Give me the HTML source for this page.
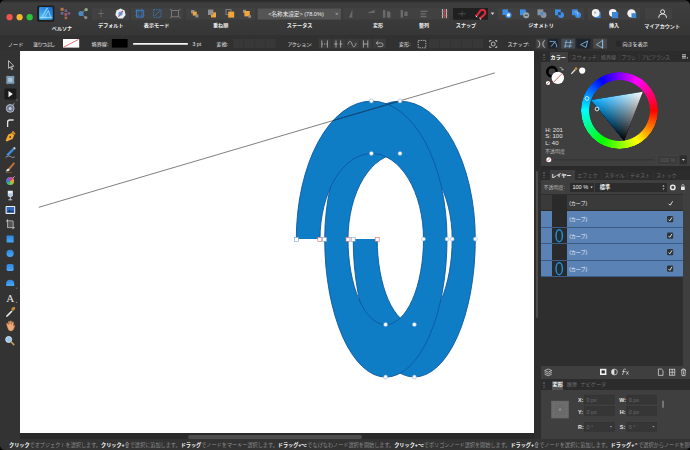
<!DOCTYPE html><html lang="ja"><head><meta charset="utf-8"><title>Affinity Designer</title><style>
*{box-sizing:border-box;margin:0;padding:0}
html,body{width:690px;height:450px;overflow:hidden;background:#333333}
body{position:relative;font-family:"Liberation Sans","Noto Sans CJK JP",sans-serif;color:#e6e6e6;font-size:5.3px;line-height:1}
.a{position:absolute}
.t{position:absolute;white-space:nowrap;line-height:8px;height:8px}
.b{font-weight:bold}
.c{text-align:center}
.lbl{position:absolute;white-space:nowrap;line-height:8px;height:8px;font-size:5.1px;color:#f0f0f0;font-weight:bold;text-align:center;transform:translateX(-50%)}
.ctx{position:absolute;white-space:nowrap;line-height:8px;height:8px;font-size:5.1px;color:#e8e8e8;top:40px}
.tab{position:absolute;white-space:nowrap;line-height:9px;height:9px;font-size:5.1px;color:#6a6a6a;top:53px}
.dim{opacity:.35}
svg{position:absolute;overflow:visible}
</style></head><body>
<div class="a" style="left:0;top:0;width:690px;height:36px;background:linear-gradient(#3f3f3f,#363636)"></div>
<div class="a" style="left:0;top:35.4px;width:690px;height:15.6px;background:#313131"></div>
<div class="a" style="left:0;top:51px;width:20px;height:399px;background:#333"></div>
<div class="a" style="left:20px;top:51px;width:514px;height:382px;background:#fff"></div>
<div class="a" style="left:20px;top:433px;width:514px;height:6px;background:#2a2a2a"></div>
<div class="a" style="left:188px;top:434.5px;width:174px;height:4px;border-radius:2px;background:#4d4d4d"></div>
<div class="a" style="left:0;top:439px;width:690px;height:11px;background:#333"></div>
<div class="a" style="left:534px;top:51px;width:7px;height:388px;background:#2e2e2e"></div>
<div class="a" style="left:535.7px;top:171px;width:2.6px;height:147px;border-radius:1.3px;background:#4d4d4d"></div>
<div class="a" style="left:541px;top:51px;width:149px;height:388px;background:#3f3f3f"></div>
<div class="a" style="left:0;top:0;width:690px;height:2.6px;background:linear-gradient(#2b2b2b 30%,#3e3e3e)"></div>
<svg class="a" style="left:0;top:0" width="690" height="52" viewBox="0 0 690 52">
<defs><linearGradient id="gA" x1="1" y1="0" x2="0.2" y2="1"><stop offset="0" stop-color="#1762cc"/><stop offset="1" stop-color="#4cc2f6"/></linearGradient></defs>
<circle cx="9.6" cy="17.2" r="3.1" fill="#f2544d"/><circle cx="19.6" cy="17.2" r="3.1" fill="#f5b52e"/><circle cx="29.7" cy="17.2" r="3.1" fill="#2bc43f"/>
<rect x="37.1" y="5.6" width="17.2" height="16.2" rx="1.5" fill="#1e1e1e"/>
<rect x="39.1" y="6.9" width="13.7" height="12.9" rx="1" fill="url(#gA)"/>
<path d="M40.6 17.4 L46.4 7.8 L48.6 7.8 L43 17.4 Z" fill="#7fd6fb" opacity=".75"/><path d="M44.6 17.4 L48.4 10.6 L50.6 17.4 M40 17.4 H52" stroke="#bfe9ff" stroke-width="0.8" fill="none" opacity=".9"/>
<g opacity=".75"><rect x="60.6" y="7.8" width="3" height="3" fill="#e0894a"/><rect x="64.6" y="9.4" width="2.6" height="2.6" fill="#8a6fb0"/><rect x="60.8" y="12" width="2.6" height="2.6" fill="#6f7fc0"/><rect x="64.4" y="13" width="2.8" height="2.8" fill="#c0607a"/><rect x="67.8" y="12.2" width="2.4" height="2.4" fill="#9a6aa8"/><rect x="64.6" y="16.6" width="2.6" height="2.6" fill="#d07050"/></g>
<g opacity=".85"><path d="M81 13.5 L86 9.6 M81 13.5 L85.6 17.6" stroke="#9aa" stroke-width=".8"/><circle cx="81" cy="13.5" r="2.6" fill="#4f96d8"/><circle cx="86.2" cy="9.6" r="1.7" fill="#a7c28a"/><circle cx="85.8" cy="17.6" r="1.6" fill="#9a9a9a"/></g>
<rect x="92" y="8" width="37" height="11.6" fill="#414141" opacity="1"/>
<rect x="131" y="8" width="52" height="11.6" fill="#414141" opacity="1"/>
<rect x="186" y="8" width="69" height="11.6" fill="#414141" opacity="1"/>
<rect x="343" y="8" width="106" height="11.6" fill="#414141" opacity="1"/>
<rect x="498" y="8" width="86" height="11.6" fill="#414141" opacity="1"/>
<rect x="588" y="8" width="52" height="11.6" fill="#414141" opacity="1"/>
<rect x="645" y="8" width="27" height="11.6" fill="#414141" opacity="1"/>
<g opacity=".35" stroke="#bbb" stroke-width=".8" fill="none"><path d="M101 9.5 V17.5 M98 13.5 H104"/></g>
<g><path d="M120.5 8.6 L124.6 10.6 L125.6 15 L122.8 18.4 L118.2 18.4 L115.4 15 L116.4 10.6 Z" fill="#e9eef6"/><path d="M118.5 16.6 L122.8 10.8" stroke="#d8484a" stroke-width="1.3"/><circle cx="120.5" cy="13.6" r="2.2" fill="#5d8ed6" opacity=".8"/></g>
<g fill="none" stroke="#3a84d4" stroke-width=".9"><rect x="136.4" y="10.2" width="6.8" height="6.8"/><path d="M135 11.8 H145 M135 15.2 H145 M138.2 8.6 V18.4 M141.6 8.6 V18.4" stroke-width=".5" opacity=".8"/></g>
<g fill="none" stroke="#3b7fc8" stroke-width=".9" stroke-dasharray="1.6 1"><rect x="153.6" y="9.8" width="7.4" height="7.4"/></g><path d="M155 15.8 L159.6 11.2" stroke="#3b7fc8" stroke-width=".8"/>
<g fill="none" stroke="#858585" stroke-width=".8"><rect x="171.6" y="10.4" width="6.8" height="6.4"/><path d="M170 9 L172 10.6 M180.4 9 L178.4 10.6 M170 18 L172 16.4 M180.4 18 L178.4 16.4"/></g>
<rect x="191" y="10" width="3.4" height="3.4" fill="#8f8f8f"/><rect x="192.8" y="11.6" width="4" height="4" fill="#f3a43a"/><rect x="195.4" y="14.4" width="3" height="3" fill="#8f8f8f"/>
<rect x="208" y="9.6" width="5.4" height="5.4" fill="#8f8f8f"/><rect x="211" y="12.4" width="5" height="5" fill="#f3a43a"/><rect x="211" y="12.4" width="2.4" height="2.6" fill="#8f8f8f"/>
<rect x="226" y="9.6" width="5" height="5" fill="none" stroke="#8f8f8f" stroke-width=".8"/><rect x="228.2" y="11.6" width="6" height="6" fill="#f3a43a"/>
<rect x="243" y="9.8" width="3" height="3" fill="#8f8f8f"/><rect x="244.4" y="11" width="5.4" height="5.4" fill="#f3a43a"/><rect x="248.4" y="15.2" width="2.6" height="2.6" fill="#8f8f8f"/>
<rect x="257.6" y="8.5" width="83.4" height="11" fill="#555555"/>
<path d="M335.6 12.6 L338 15 M338 12.6 L335.6 15" stroke="#a8a8a8" stroke-width=".7"/>
<g opacity=".3" fill="#c8c8c8"><path d="M349 17.6 L352.4 9.6 L352.4 17.6 Z"/><path d="M367 13 L374.6 10 V13 Z"/><rect x="383" y="10" width="2.4" height="7.6"/><rect x="387" y="11.4" width="3.4" height="6.2"/><rect x="400.6" y="10" width="2.4" height="7.6"/><rect x="404.4" y="11.6" width="3.2" height="4.4"/><rect x="420.6" y="10.6" width="7" height="1.4"/><rect x="420.6" y="13.2" width="5" height="1.4"/><rect x="420.6" y="15.8" width="6" height="1.4"/></g>
<g><path d="M442.6 9 V18.2 M446.4 9 V18.2" stroke="#d8d8d8" stroke-width=".9"/><path d="M444.5 9 V18.2" stroke="#d94040" stroke-width=".9"/><path d="M441 11.6 H448 M441 15.6 H448" stroke="#b66" stroke-width=".5"/></g>
<rect x="453" y="8" width="35" height="11.7" fill="#202020"/>
<g opacity=".4" stroke="#aaa" stroke-width=".7" fill="none"><path d="M458 13.8 H466 M462 11 V16.6"/></g>
<path d="M476.2 16.4 L479.6 11.8 A2.9 2.9 0 1 1 483.8 15.2 L480.2 18.4" fill="none" stroke="#e0283c" stroke-width="2.1"/><path d="M475.6 15.8 L477.2 17.2 M479.4 18 L481 19.4" stroke="#eee" stroke-width="1"/>
<path d="M490.6 12.6 H494.4 L492.5 15 Z" fill="#cfcfcf"/>
<rect x="502.5" y="9.4" width="5.6" height="5.6" fill="#3e8fe6"/><circle cx="508.5" cy="15" r="3.1" fill="#3e8fe6"/><circle cx="508.5" cy="15" r="1.7" fill="#dfe9f5"/>
<rect x="520" y="9.4" width="5.8" height="5.8" fill="#3e8fe6"/><circle cx="526.2" cy="15.2" r="3" fill="#9aa3ad"/><rect x="524.6" y="14.8" width="3.2" height=".9" fill="#333"/>
<rect x="537.5" y="9.4" width="5.8" height="5.8" fill="#8b949e"/><circle cx="543.5" cy="15" r="3" fill="#8b949e"/><rect x="540.5" y="12" width="2.8" height="3.2" fill="#4e88cc"/>
<rect x="555" y="9.4" width="5.8" height="5.8" fill="#3e8fe6"/><circle cx="561" cy="15" r="3" fill="#3e8fe6"/><rect x="558" y="12" width="2.8" height="3.2" fill="#2a4a70"/>
<rect x="572" y="9.4" width="5.8" height="5.8" fill="#3e8fe6"/><circle cx="578" cy="15" r="3" fill="#3e8fe6"/><path d="M574.8 12 h3 v3.2" stroke="#cfe0f5" stroke-width=".6" fill="none"/>
<rect x="594.7" y="12" width="6" height="6" fill="#3e86d6"/><circle cx="595.7" cy="13" r="3.9" fill="#f2f2f2"/><circle cx="595.1" cy="12.6" r="1.2" fill="#bbb"/>
<circle cx="612.8" cy="12.8" r="3.9" fill="#f2f2f2"/><rect x="612" y="12" width="6.2" height="6.2" fill="#3e86d6"/>
<circle cx="631.5" cy="13.4" r="4.2" fill="#f2f2f2"/><rect x="631.5" y="13.2" width="4.8" height="4.8" fill="#3e86d6"/>
<g fill="none" stroke="#e4e4e4" stroke-width="1"><circle cx="662.6" cy="11.8" r="2"/><path d="M658.6 17.8 A4 4 0 0 1 666.6 17.8"/></g>
<rect x="63" y="39" width="16.2" height="8.6" fill="#fff"/><path d="M63.6 47.2 L78.6 39.4" stroke="#e05050" stroke-width=".8"/>
<rect x="111.8" y="39" width="15.8" height="8.6" fill="#000"/>
<rect x="133" y="42.9" width="55" height="1.9" rx=".9" fill="#f4f4f4"/>
<rect x="233.2" y="39" width="10.2" height="9" fill="#383838"/>
<rect x="244.0" y="39" width="10.2" height="9" fill="#383838"/>
<rect x="254.8" y="39" width="10.2" height="9" fill="#383838"/>
<rect x="265.6" y="39" width="10.2" height="9" fill="#383838"/>
<rect x="318.6" y="38.6" width="12.8" height="10" fill="#3b3b3b"/>
<rect x="332.4" y="38.6" width="13.2" height="10" fill="#3b3b3b"/>
<rect x="346.6" y="38.6" width="12.8" height="10" fill="#3b3b3b"/>
<rect x="360.4" y="38.6" width="11.6" height="10" fill="#3b3b3b"/>
<rect x="373" y="38.6" width="13.0" height="10" fill="#3b3b3b"/>
<g stroke="#b8b8b8" stroke-width=".8" fill="none"><path d="M321.8 40.4 V47.6 M327.40000000000003 40.4 V47.6"/><path d="M321.8 44 H327.40000000000003" stroke-dasharray="1.2 1"/></g>
<g stroke="#b8b8b8" stroke-width=".8" fill="none"><path d="M336 40.4 V47.6 M340.6 40.4 V47.6"/><path d="M334 44 H337.4 M339.4 44 H342.4"/></g>
<g stroke="#b8b8b8" stroke-width=".8" fill="none"><path d="M347.8 44.4 C349.2 40.4 350.8 40.4 352.0 44.2 C353.2 48 354.8 48 356.2 43"/></g>
<g stroke="#b8b8b8" stroke-width=".8" fill="none"><path d="M363.4 40.4 V47.6 M367.79999999999995 40.4 V47.6 M363.4 44 H367.79999999999995"/></g>
<g stroke="#b8b8b8" stroke-width=".8" fill="none"><path d="M378.2 41.2 L376.2 43 L378.2 44.8 M376.40000000000003 43 H381.2 A1.8 1.8 0 0 1 381.2 46.6 H377.8"/></g>
<rect x="418.2" y="40.4" width="7.6" height="7.4" fill="none" stroke="#d0d0d0" stroke-width=".8" stroke-dasharray="1.5 1"/>
<rect x="429.0" y="39" width="10.4" height="9" fill="#383838"/>
<rect x="440.0" y="39" width="10.4" height="9" fill="#383838"/>
<rect x="451.0" y="39" width="10.4" height="9" fill="#383838"/>
<rect x="462.0" y="39" width="10.4" height="9" fill="#383838"/>
<rect x="473.0" y="39" width="10.4" height="9" fill="#383838"/>
<g fill="none" stroke="#d8d8d8" stroke-width=".8"><circle cx="493.2" cy="44" r="2"/><path d="M489.6 42 V40.6 H491.4 M495 40.6 H496.8 V42 M496.8 46 V47.4 H495 M491.4 47.4 H489.6 V46"/></g>
<rect x="535.8" y="38.6" width="10.8" height="10" fill="#424242"/><g fill="none" stroke="#d8d8d8" stroke-width=".8"><path d="M538 40.4 Q541.6 44 538 47.6 M544.6 40.4 Q541 44 544.6 47.6"/></g>
<rect x="548.2" y="38.6" width="10" height="10" fill="#1e242c"/><path d="M549.6 41.4 H552.4 Q556.6 41.6 556.8 47.4 M555.6 41 L551 46.6" stroke="#8fc0f0" stroke-width=".8" fill="none"/>
<rect x="561.3" y="38.6" width="13.7" height="10" fill="#454a50"/><path d="M564 46 H572 M566.4 40 L565 47.8 M570.8 40 L569.4 47.8 M564.6 42.4 H572.6" stroke="#8fc0f0" stroke-width=".7" fill="none"/>
<rect x="576.4" y="38.6" width="14" height="10" fill="#1e242c"/><path d="M580.6 44.6 L587.6 41 L586 47.4 Z" stroke="#8fc0f0" stroke-width=".8" fill="none"/>
<rect x="593.2" y="38.6" width="13.8" height="10" fill="#4a4846"/><path d="M596.4 44.6 L602.6 40.4 V48 Z M602.6 39.4 V48.6" stroke="#8fc0f0" stroke-width=".8" fill="none"/>
<rect x="616" y="40.8" width="5.2" height="5.8" rx=".8" fill="#282828"/>
</svg>
<div class="lbl" style="left:62px;top:24px">ペルソナ</div>
<div class="lbl" style="left:110.8px;top:20.6px">デフォルト</div>
<div class="lbl" style="left:156.6px;top:20.6px">表示モード</div>
<div class="lbl" style="left:220.6px;top:20.6px">重ね順</div>
<div class="lbl" style="left:299.6px;top:20.6px">ステータス</div>
<div class="lbl" style="left:378px;top:20.6px">変形</div>
<div class="lbl" style="left:424px;top:20.6px">整列</div>
<div class="lbl" style="left:466px;top:20.6px">スナップ</div>
<div class="lbl" style="left:541px;top:20.6px">ジオメトリ</div>
<div class="lbl" style="left:614px;top:20.6px">挿入</div>
<div class="lbl" style="left:662.2px;top:21.6px">マイアカウント</div>
<div class="t c" style="left:256px;top:10px;width:80px;font-size:5.6px;color:#ededed">&lt;名称未設定&gt; (78.0%)</div>
<div class="ctx" style="left:8px;">ノード</div>
<div class="ctx" style="left:33.2px;letter-spacing:-.9px">塗りつぶし</div>
<div class="ctx" style="left:91.6px;">境界線:</div>
<div class="ctx" style="left:192.6px;">3 pt</div>
<div class="ctx" style="left:216.6px;">変換:</div>
<div class="ctx" style="left:287.4px;letter-spacing:-.4px">アクション:</div>
<div class="ctx" style="left:399px;">変形:</div>
<div class="ctx" style="left:507.4px;">スナップ:</div>
<div class="ctx" style="left:622.4px;">向きを表示</div>
<svg class="a" style="left:0;top:51px" width="20" height="382" viewBox="0 51 20 382">
<defs><linearGradient id="gB" x1="0" y1="0" x2="0" y2="1"><stop offset="0" stop-color="#2f86e0"/><stop offset="1" stop-color="#4aa8f4"/></linearGradient></defs>
<path d="M8.6 60.6 L8.6 68.4 L10.4 66.8 L11.6 69.6 L12.6 69.2 L11.4 66.4 L13.8 66.2 Z" fill="#2a2a2a" stroke="#dedede" stroke-width=".8" stroke-linejoin="round"/>
<rect x="6.4" y="76" width="7.8" height="7.8" fill="#7f9fb8"/><rect x="7.8" y="77.4" width="5" height="5" fill="#a9c3d6"/><path d="M5.6 77.4 H15 M5.6 82.4 H15 M7.8 75.2 V84.6 M12.8 75.2 V84.6" stroke="#6f8fa8" stroke-width=".5"/>
<rect x="4.4" y="88.6" width="11.8" height="11" rx="1.4" fill="#1b1b1b"/><path d="M8.5 91 L8.5 97.2 L12.8 94.1 Z" fill="#f4f4f4"/><path d="M16 100.4 l1.4 0 l0 -1.4 z" fill="#999"/>
<circle cx="10.2" cy="108.4" r="3.9" fill="#6b7590" stroke="#b4b9c6" stroke-width="1"/><circle cx="10.2" cy="108.4" r="1.5" fill="#c9cede"/><path d="M12.6 105 L14.4 103.4" stroke="#ccc" stroke-width=".8"/>
<path d="M7.6 127 V122.2 Q7.6 120 9.8 120 H13.6" fill="none" stroke="#e2e2e2" stroke-width="1.3"/>
<path d="M5.6 140.6 L8.2 134.6 L12 133 L14.2 135.2 L12.6 139 L6.6 141.4 Z" fill="#f0a830"/><path d="M11.4 132.2 L13 130.8 L15.6 133.4 L14.2 135 Z" fill="#d88a2a"/><circle cx="10.2" cy="137" r=".9" fill="#5a3a10"/>
<path d="M6.4 154.6 L13 148 L14.6 149.6 L8 156.2 Z" fill="#3f8fe0"/><path d="M13 148 L14.4 146.8 L15.8 148.4 L14.6 149.6 Z" fill="#d8d8d8"/><path d="M5.4 157.4 Q9 154.6 11.4 157 Q13 158.4 15 156.6" fill="none" stroke="#9aa0b0" stroke-width=".8"/>
<path d="M8.2 168.4 L13.6 162.2 L15 163.4 L9.8 169.8 Z" fill="#c9703a"/><path d="M6 171.4 Q6.6 168.6 8.4 168.4 L9.8 169.8 Q9.4 171.4 6 171.4 Z" fill="#e8e0d0"/><path d="M5.4 172.6 H12" stroke="#a06030" stroke-width=".7"/>
<g transform="translate(10.2 181)"><circle r="3.9" fill="#888"/><path d="M0 0 L0 -3.9 A3.9 3.9 0 0 1 3.38 -1.95 Z" fill="#e8407a"/><path d="M0 0 L3.38 -1.95 A3.9 3.9 0 0 1 3.38 1.95 Z" fill="#f2a030"/><path d="M0 0 L3.38 1.95 A3.9 3.9 0 0 1 0 3.9 Z" fill="#9ad030"/><path d="M0 0 L0 3.9 A3.9 3.9 0 0 1 -3.38 1.95 Z" fill="#30c070"/><path d="M0 0 L-3.38 1.95 A3.9 3.9 0 0 1 -3.38 -1.95 Z" fill="#3080e0"/><path d="M0 0 L-3.38 -1.95 A3.9 3.9 0 0 1 0 -3.9 Z" fill="#9050d0"/><path d="M2.6 -2.8 L4.4 -4.6" stroke="#ddd" stroke-width=".8"/></g>
<path d="M7.8 190.8 H12.8 V195.2 Q12.8 197 10.3 197 Q7.8 197 7.8 195.2 Z" fill="#eef2f8"/><path d="M10.3 197 V199.6 M8.4 199.8 H12.2" stroke="#d8dce4" stroke-width=".9"/><rect x="8.4" y="193.4" width="3.8" height="2.6" fill="#a8c4e6"/>
<rect x="5.6" y="206" width="9.6" height="8" rx=".8" fill="#eef2f8"/><rect x="6.6" y="207" width="7.6" height="5.6" fill="#2f68b8"/><path d="M6.6 212.6 L9.4 209.6 L11.4 211.4 L12.6 210.4 L14.2 212.6 Z" fill="#163a70"/>
<path d="M7.6 219.4 V227.6 H14.6 M6 221 H13 V229.2" fill="none" stroke="#d8d8d8" stroke-width=".9"/><path d="M7.6 221 H13 V227.6 H7.6 Z" fill="#6a6a6a" opacity=".6"/>
<rect x="6.6" y="235.6" width="7" height="7" rx=".6" fill="url(#gB)"/>
<circle cx="10.1" cy="253.4" r="3.6" fill="url(#gB)"/>
<rect x="6.6" y="264" width="7" height="7" rx="1.6" fill="url(#gB)"/>
<path d="M6.2 286 V283.6 A4 3.8 0 0 1 14.2 283.6 V286 Z" fill="url(#gB)"/><path d="M15.8 288.6 l1.4 0 l0 -1.4 z" fill="#999"/>
<path d="M6.4 315.4 L11.4 310.4 L12.6 311.6 L7.6 316.6 L6 317 Z" fill="#e8e8e8"/><path d="M11 309 L13 307 Q14.4 306.4 15 307.4 Q15.6 308.4 14.8 309.2 L12.8 311.2 Z" fill="#c88a3a"/>
<path d="M7.2 326.4 L6.4 323.6 Q7 322.8 7.8 323.6 L8.4 325 L8.4 321.6 Q9.1 320.8 9.7 321.6 L9.9 324.4 L10.3 321 Q11 320.4 11.6 321.2 L11.6 324.6 L12.4 322 Q13.2 321.6 13.6 322.4 L13.4 326.2 Q14.2 325 15 325.6 L13.4 329.4 Q12.6 331 10.6 331 Q8.4 331 7.2 326.4 Z" fill="#f0a878" stroke="#c87848" stroke-width=".4"/>
<circle cx="8.7" cy="339.5" r="3" fill="#9cc6ee" stroke="#d8e6f4" stroke-width=".9"/><path d="M11.2 342 L13.8 344.6" stroke="#d0a060" stroke-width="1.5" stroke-linecap="round"/>
</svg>
<div class="a" style="left:6.2px;top:290.6px;font-family:'Liberation Serif',serif;font-size:11px;line-height:14px;color:#e6e6e6">A</div>
<svg class="a" style="left:0;top:0" width="20" height="450"><path d="M15.6 303 l1.4 0 l0 -1.4 z" fill="#999"/></svg>
<svg class="a" style="left:0;top:0" width="690" height="450" viewBox="0 0 690 450">
<defs><clipPath id="cpS"><path d="M353.20 239.1 A61.05 138 0 0 0 475.30 239.1 L452.20 239.1 A37.50 85.6 0 0 1 377.20 239.1 Z"/><path d="M324.70 239.1 A75.30 138 0 0 1 475.30 239.1 L452.20 239.1 A52.10 85.6 0 0 0 348.00 239.1 Z"/><path d="M324.70 239.1 A61.15 138 0 0 0 447.00 239.1 L423.50 239.1 A37.75 85.6 0 0 1 348.00 239.1 Z"/><path d="M296.30 239.1 A75.35 138 0 0 1 447.00 239.1 L423.50 239.1 A51.75 85.6 0 0 0 320.00 239.1 Z"/></clipPath></defs>
<path d="M353.20 239.1 A61.05 138 0 0 0 475.30 239.1 L452.20 239.1 A37.50 85.6 0 0 1 377.20 239.1 Z" fill="#0f7dc6"/>
<path d="M353.20 239.1 A61.05 138 0 0 0 475.30 239.1 M452.20 239.1 A37.50 85.6 0 0 1 377.20 239.1" fill="none" stroke="#0c58a2" stroke-width="0.9"/>
<path d="M324.70 239.1 A75.30 138 0 0 1 475.30 239.1 L452.20 239.1 A52.10 85.6 0 0 0 348.00 239.1 Z" fill="#0f7dc6"/>
<path d="M324.70 239.1 A75.30 138 0 0 1 475.30 239.1 M452.20 239.1 A52.10 85.6 0 0 0 348.00 239.1" fill="none" stroke="#0c58a2" stroke-width="0.9"/>
<path d="M324.70 239.1 A61.15 138 0 0 0 447.00 239.1 L423.50 239.1 A37.75 85.6 0 0 1 348.00 239.1 Z" fill="#0f7dc6"/>
<path d="M324.70 239.1 A61.15 138 0 0 0 447.00 239.1 M423.50 239.1 A37.75 85.6 0 0 1 348.00 239.1" fill="none" stroke="#0c58a2" stroke-width="0.9"/>
<path d="M296.30 239.1 A75.35 138 0 0 1 447.00 239.1 L423.50 239.1 A51.75 85.6 0 0 0 320.00 239.1 Z" fill="#0f7dc6"/>
<path d="M296.30 239.1 A75.35 138 0 0 1 447.00 239.1 M423.50 239.1 A51.75 85.6 0 0 0 320.00 239.1" fill="none" stroke="#0c58a2" stroke-width="0.9"/>
<line x1="38.8" y1="207.3" x2="494.8" y2="72.9" stroke="#2a2a2a" stroke-width="0.6"/>
<line x1="38.8" y1="207.3" x2="494.8" y2="72.9" stroke="#0b4a88" stroke-width="0.9" clip-path="url(#cpS)"/>
<rect x="294.3" y="237.3" width="4" height="4" fill="#fff" stroke="#7f9fcc" stroke-width="0.6"/>
<rect x="317.8" y="237.3" width="4" height="4" fill="#fff" stroke="#e06a6a" stroke-width="0.6"/>
<rect x="322.7" y="237.3" width="4" height="4" fill="#fff" stroke="#7f9fcc" stroke-width="0.6"/>
<rect x="346.0" y="237.3" width="4" height="4" fill="#fff" stroke="#e06a6a" stroke-width="0.6"/>
<rect x="351.2" y="237.3" width="4" height="4" fill="#fff" stroke="#7f9fcc" stroke-width="0.6"/>
<rect x="375.2" y="237.3" width="4" height="4" fill="#fff" stroke="#e06a6a" stroke-width="0.6"/>
<circle cx="423.5" cy="239.1" r="2" fill="#fff" stroke="#7f9fcc" stroke-width="0.5"/>
<circle cx="447.0" cy="239.1" r="2" fill="#fff" stroke="#7f9fcc" stroke-width="0.5"/>
<circle cx="452.2" cy="239.1" r="2" fill="#fff" stroke="#7f9fcc" stroke-width="0.5"/>
<circle cx="475.3" cy="239.1" r="2" fill="#fff" stroke="#7f9fcc" stroke-width="0.5"/>
<circle cx="371.4" cy="101.0" r="2" fill="#fff" stroke="#7f9fcc" stroke-width="0.5"/>
<circle cx="371.4" cy="153.4" r="2" fill="#fff" stroke="#7f9fcc" stroke-width="0.5"/>
<circle cx="400.0" cy="101.0" r="2" fill="#fff" stroke="#7f9fcc" stroke-width="0.5"/>
<circle cx="400.0" cy="153.4" r="2" fill="#fff" stroke="#7f9fcc" stroke-width="0.5"/>
<circle cx="385.6" cy="324.6" r="2" fill="#fff" stroke="#7f9fcc" stroke-width="0.5"/>
<circle cx="385.6" cy="377.0" r="2" fill="#fff" stroke="#7f9fcc" stroke-width="0.5"/>
<circle cx="414.4" cy="324.6" r="2" fill="#fff" stroke="#7f9fcc" stroke-width="0.5"/>
<circle cx="414.4" cy="377.0" r="2" fill="#fff" stroke="#7f9fcc" stroke-width="0.5"/>
</svg>
<div class="a" style="left:534px;top:51px;width:156px;height:11.4px;background:#2c2c2c"></div>
<div class="a" style="left:549.6px;top:52.4px;width:18.6px;height:10px;background:#3f3f3f"></div>
<div class="a" style="left:543.4px;top:54px;width:1.6px;height:6.4px;border-left:.6px dotted #505050;border-right:.6px dotted #505050"></div>
<div class="tab" style="left:550.6px;top:53.2px;color:#fff;font-weight:bold;">カラー</div>
<div class="tab" style="left:571.4px;top:53.2px;">スウォッチ</div>
<div class="tab" style="left:600.8px;top:53.2px;">境界線</div>
<div class="tab" style="left:621.2px;top:53.2px;">ブラシ</div>
<div class="tab" style="left:641.6px;top:53.2px;letter-spacing:-0.4px;">アピアランス</div>
<div class="a" style="left:569.6px;top:54px;width:.6px;height:6.6px;background:#343434"></div>
<div class="a" style="left:598.4px;top:54px;width:.6px;height:6.6px;background:#343434"></div>
<div class="a" style="left:618.6px;top:54px;width:.6px;height:6.6px;background:#343434"></div>
<div class="a" style="left:638.6px;top:54px;width:.6px;height:6.6px;background:#343434"></div>
<div class="a" style="left:580.5999999999999px;top:72.1px;width:77.4px;height:77.4px;border-radius:50%;background:conic-gradient(from 90deg,#ff0000,#ffff00,#00ff00,#00ffff,#0000ff,#ff00ff,#ff0000);-webkit-mask:radial-gradient(circle closest-side,transparent 30.0px,#000 30.799999999999997px,#000 38.1px,transparent 38.7px);mask:radial-gradient(circle closest-side,transparent 30.0px,#000 30.799999999999997px,#000 38.1px,transparent 38.7px)"></div>
<svg class="a" style="left:0;top:0" width="690" height="450" viewBox="0 0 690 450">
<defs><linearGradient id="th" gradientUnits="userSpaceOnUse" x1="591.01" y1="99.94" x2="633.44" y2="116.23"><stop offset="0" stop-color="#00a6ff"/><stop offset="1" stop-color="#000"/></linearGradient><linearGradient id="tw" gradientUnits="userSpaceOnUse" x1="642.85" y1="91.73" x2="607.53" y2="120.33"><stop offset="0" stop-color="#fff"/><stop offset="1" stop-color="#000"/></linearGradient></defs>
<g style="isolation:isolate"><polygon points="591.01,99.94 642.85,91.73 624.04,140.73" fill="url(#th)"/><polygon points="591.01,99.94 642.85,91.73 624.04,140.73" fill="url(#tw)" style="mix-blend-mode:plus-lighter"/></g>
<circle cx="587.0" cy="98.4" r="1.9" fill="none" stroke="#fff" stroke-width=".8"/>
<circle cx="597" cy="109" r="1.9" fill="none" stroke="#fff" stroke-width=".8"/>
<circle cx="552" cy="71.8" r="4.7" fill="none" stroke="#000" stroke-width="2.6"/>
<circle cx="557.8" cy="77.9" r="6.2" fill="#fff"/><path d="M553.6 82.2 L562 73.6" stroke="#e04848" stroke-width=".9"/>
<circle cx="548" cy="83" r="2.1" fill="#fff"/><path d="M546.6 84.4 L549.4 81.6" stroke="#e04848" stroke-width=".7"/>
<path d="M559.6 67.4 Q562.4 67 562.6 70 M561.6 69.2 L562.7 70.4 L563.6 69" fill="none" stroke="#cfcfcf" stroke-width=".6"/>
<path d="M570.8 73.4 L574.6 69.2 L575.6 70.2 L571.8 74.2 Z" fill="#e0e0e0"/><path d="M574.4 68.8 L576 67 L577.6 68.6 L575.8 70.4 Z" fill="#d89030"/>
<circle cx="582.2" cy="70.6" r="3.1" fill="#fff"/>
<circle cx="548.8" cy="159.8" r="2.5" fill="#fff"/><path d="M547.2 161.4 L550.4 158.2" stroke="#e04848" stroke-width=".8"/>
<rect x="554" y="159.2" width="100" height="1.2" rx=".6" fill="#363636"/>
<rect x="657" y="155.4" width="21" height="8.8" fill="#3a3a3a" stroke="#4b4b4b" stroke-width=".5"/>
<rect x="679.6" y="155.4" width="7.4" height="8.8" fill="#2e2e2e"/><path d="M682 159 H684.8 L683.4 160.8 Z" fill="#ddd"/>
<path d="M682 54.8 H686 M682 56.4 H686 M682 58.0 H686" stroke="#e4e4e4" stroke-width=".8"/><rect x="687" y="57.4" width="1" height="1" fill="#e4e4e4"/>
<path d="M682 172.8 H686 M682 174.4 H686 M682 176.0 H686" stroke="#e4e4e4" stroke-width=".8"/><rect x="687" y="175.4" width="1" height="1" fill="#e4e4e4"/>
</svg>
<div class="t" style="left:545.2px;top:125.6px;font-size:6px;color:#e4e4e4">H: 201</div>
<div class="t" style="left:545.2px;top:132.3px;font-size:6px;color:#e4e4e4">S: 100</div>
<div class="t" style="left:545.2px;top:138.8px;font-size:6px;color:#e4e4e4">L: 40</div>
<div class="t" style="left:545px;top:146.6px;font-size:5px;color:#b8b8b8">不透明度</div>
<div class="t" style="left:660px;top:155.8px;font-size:5.4px;color:#5e5e5e">100 %</div>
<div class="a" style="left:541px;top:166.4px;width:149px;height:3.4px;background:#2a2a2a"></div>
<div class="a" style="left:541px;top:169.6px;width:149px;height:10.4px;background:#2c2c2c"></div>
<div class="a" style="left:549.6px;top:170.4px;width:25px;height:9.8px;background:#3f3f3f"></div>
<div class="a" style="left:543.4px;top:172px;width:1.6px;height:6.4px;border-left:.6px dotted #505050;border-right:.6px dotted #505050"></div>
<div class="tab" style="left:551.2px;top:171px;color:#fff;font-weight:bold;">レイヤー</div>
<div class="tab" style="left:577.2px;top:171px;">エフェク</div>
<div class="tab" style="left:604.2px;top:171px;">スタイル</div>
<div class="tab" style="left:630px;top:171px;">テキスト</div>
<div class="tab" style="left:656.2px;top:171px;">ストック</div>
<div class="a" style="left:600.6px;top:172px;width:.6px;height:6.6px;background:#343434"></div>
<div class="a" style="left:627px;top:172px;width:.6px;height:6.6px;background:#343434"></div>
<div class="a" style="left:652.8px;top:172px;width:.6px;height:6.6px;background:#343434"></div>
<div class="t" style="left:543.6px;top:183.4px;font-size:5px;color:#b8b8b8">不透明度:</div>
<div class="a" style="left:570.4px;top:183px;width:24px;height:9px;background:#2c2c2c"></div>
<div class="a" style="left:595.4px;top:183px;width:71.8px;height:9px;background:#2c2c2c"></div>
<div class="t" style="left:572.4px;top:183.4px;font-size:5.6px;color:#f0f0f0">100 %</div>
<div class="t" style="left:599.8px;top:183.4px;font-size:5.2px;color:#f0f0f0;font-weight:bold">標準</div>
<svg class="a" style="left:0;top:0" width="690" height="450" viewBox="0 0 690 450">
<path d="M590.4 186.6 H592.8 L591.6 188.2 Z" fill="#ddd"/>
<path d="M662.4 186.4 L663.5 185 L664.6 186.4 Z M662.4 188.4 L663.5 189.8 L664.6 188.4 Z" fill="#e0e0e0"/>
<circle cx="672.8" cy="187.4" r="2.2" fill="none" stroke="#e6e6e6" stroke-width="1.5"/>
<rect x="681" y="186.6" width="3.8" height="3.4" fill="#e6e6e6"/><path d="M681.8 186.6 V185.6 A1.1 1.1 0 0 1 684 185.6 V186.6" fill="none" stroke="#e6e6e6" stroke-width=".6"/>
</svg>
<div class="a" style="left:541.4px;top:194.4px;width:141.4px;height:172px;background:#2e2e2e"></div>
<div class="a" style="left:541.4px;top:194.5px;width:141.4px;height:16.5px;background:#3a3a3a;border-bottom:.7px solid #2a2a2a"></div>
<div class="a" style="left:551.6px;top:194.9px;width:15.2px;height:15.6px;background:#2a2a2a"></div>
<div class="t" style="left:569.2px;top:198.7px;font-size:5px;color:#e6edf6">(カーブ)</div>
<div class="a" style="left:541.4px;top:211px;width:141.4px;height:16.5px;background:#5a82b5;border-bottom:.7px solid #3c5c88"></div>
<div class="a" style="left:551.6px;top:211.4px;width:15.2px;height:15.6px;background:#2a2a2a"></div>
<div class="t" style="left:569.2px;top:215.2px;font-size:5px;color:#e6edf6">(カーブ)</div>
<div class="a" style="left:541.4px;top:227.5px;width:141.4px;height:16.5px;background:#5a82b5;border-bottom:.7px solid #3c5c88"></div>
<div class="a" style="left:551.6px;top:227.9px;width:15.2px;height:15.6px;background:#2a2a2a"></div>
<div class="t" style="left:569.2px;top:231.7px;font-size:5px;color:#e6edf6">(カーブ)</div>
<div class="a" style="left:541.4px;top:244px;width:141.4px;height:16.5px;background:#5a82b5;border-bottom:.7px solid #3c5c88"></div>
<div class="a" style="left:551.6px;top:244.4px;width:15.2px;height:15.6px;background:#2a2a2a"></div>
<div class="t" style="left:569.2px;top:248.2px;font-size:5px;color:#e6edf6">(カーブ)</div>
<div class="a" style="left:541.4px;top:260.5px;width:141.4px;height:16.5px;background:#5a82b5;border-bottom:.7px solid #3c5c88"></div>
<div class="a" style="left:551.6px;top:260.9px;width:15.2px;height:15.6px;background:#2a2a2a"></div>
<div class="t" style="left:569.2px;top:264.7px;font-size:5px;color:#e6edf6">(カーブ)</div>
<svg class="a" style="left:0;top:0" width="690" height="450" viewBox="0 0 690 450">
<ellipse cx="559.2" cy="235.7" rx="3.2" ry="6" fill="none" stroke="#1a90dc" stroke-width="1.5"/>
<ellipse cx="559.2" cy="268.7" rx="3.2" ry="6" fill="none" stroke="#1a90dc" stroke-width="1.5"/>
<path d="M668.6 203.9 L670.4 205.1 L672.6 201.3" fill="none" stroke="#e8e8e8" stroke-width=".9"/>
<rect x="667" y="216" width="6.2" height="6.2" rx="1.2" fill="#2e3338"/><path d="M668.6 219.6 L669.8 220.8 L672 217.4" fill="none" stroke="#f0f0f0" stroke-width=".9"/>
<rect x="667" y="232.5" width="6.2" height="6.2" rx="1.2" fill="#2e3338"/><path d="M668.6 236.1 L669.8 237.3 L672 233.9" fill="none" stroke="#f0f0f0" stroke-width=".9"/>
<rect x="667" y="249" width="6.2" height="6.2" rx="1.2" fill="#2e3338"/><path d="M668.6 252.6 L669.8 253.8 L672 250.4" fill="none" stroke="#f0f0f0" stroke-width=".9"/>
<rect x="667" y="265.5" width="6.2" height="6.2" rx="1.2" fill="#2e3338"/><path d="M668.6 269.1 L669.8 270.3 L672 266.9" fill="none" stroke="#f0f0f0" stroke-width=".9"/>
<g fill="none" stroke="#e0e0e0" stroke-width=".7"><path d="M544.6 370.6 L548.2 369 L551.8 370.6 L548.2 372.2 Z"/><path d="M544.6 372.4 L548.2 374 L551.8 372.4 M544.6 374.2 L548.2 375.8 L551.8 374.2"/></g>
<rect x="600" y="368.8" width="6.4" height="6.2" fill="#f0f0f0"/><rect x="601.6" y="370.4" width="3.2" height="3" fill="#2c2c2c"/>
<circle cx="614.4" cy="372" r="2.9" fill="none" stroke="#e0e0e0" stroke-width=".7"/><path d="M614.4 369.1 A2.9 2.9 0 0 0 614.4 374.9 Z" fill="#e0e0e0"/>
<path d="M622.4 375 Q624 372 623.6 369.6 Q624.6 368.6 625.8 369.4 M622.2 371.6 H625.6 M626.4 371.4 L628.4 374.6 M628.4 371.4 L626.4 374.6" fill="none" stroke="#e0e0e0" stroke-width=".7"/>
<path d="M658.4 369 H661.4 L663 370.6 V375.4 H658.4 Z" fill="none" stroke="#e4e4e4" stroke-width=".7"/>
<g fill="none" stroke="#e4e4e4" stroke-width=".7"><rect x="669.6" y="369.2" width="5.2" height="6"/><path d="M672.2 369.2 V375.2 M669.6 372.2 H674.8"/></g>
<path d="M681 370 H686 M682.6 370 V369 H684.4 V370 M681.6 370 L682 375.6 H685 L685.4 370 M683.5 371.2 V374.4" fill="none" stroke="#e4e4e4" stroke-width=".7"/>
</svg>
<div class="a" style="left:541px;top:379.4px;width:149px;height:10.4px;background:#2c2c2c"></div>
<div class="a" style="left:551.6px;top:380.6px;width:11.2px;height:9.2px;background:#e0e0e0;opacity:.22"></div>
<div class="a" style="left:543.4px;top:381.6px;width:1.6px;height:6.4px;border-left:.6px dotted #505050;border-right:.6px dotted #505050"></div>
<div class="tab" style="left:552.6px;top:380.4px;color:#fff;font-weight:bold;">変形</div>
<div class="tab" style="left:566.8px;top:380.4px;">履歴</div>
<div class="tab" style="left:580.6px;top:380.4px;">ナビゲータ</div>
<svg class="a" style="left:0;top:0" width="690" height="450" viewBox="0 0 690 450">
<rect x="551.2" y="400.8" width="17.6" height="17.6" fill="#6a6a6a"/><rect x="553.6" y="403.2" width="12.8" height="12.8" fill="none" stroke="#7c7c7c" stroke-width=".8" stroke-dasharray="1.2 1"/><rect x="558.8" y="408.4" width="2.4" height="2.4" fill="#8a8a8a"/>
<rect x="584.4" y="395.2" width="29.8" height="8.8" fill="#363636" stroke="#303030" stroke-width=".5"/>
<rect x="626.8" y="395.2" width="29.8" height="8.8" fill="#363636" stroke="#303030" stroke-width=".5"/>
<rect x="584.4" y="406.6" width="29.8" height="8.8" fill="#363636" stroke="#303030" stroke-width=".5"/>
<rect x="626.8" y="406.6" width="29.8" height="8.8" fill="#363636" stroke="#303030" stroke-width=".5"/>
<rect x="584.4" y="422.4" width="29.8" height="8.8" fill="#363636" stroke="#303030" stroke-width=".5"/>
<rect x="626.8" y="422.4" width="29.8" height="8.8" fill="#363636" stroke="#303030" stroke-width=".5"/>
<path d="M609.8 426 H612.1999999999999 L611.0 427.6 Z" fill="#9a9a9a"/>
<path d="M652.1999999999999 426 H654.5999999999999 L653.4 427.6 Z" fill="#9a9a9a"/>
<path d="M663 400.8 V407.8" stroke="#9a9a9a" stroke-width="1.2"/>
</svg>
<div class="t" style="left:578px;top:396.2px;font-size:5.4px;color:#e8e8e8;font-weight:bold">X:</div>
<div class="t" style="left:586.4px;top:396.2px;font-size:5.4px;color:#6c6c6c">0 px</div>
<div class="t" style="left:619.2px;top:396.2px;font-size:5.4px;color:#e8e8e8;font-weight:bold">W:</div>
<div class="t" style="left:628.8px;top:396.2px;font-size:5.4px;color:#6c6c6c">0 px</div>
<div class="t" style="left:578px;top:407.6px;font-size:5.4px;color:#e8e8e8;font-weight:bold">Y:</div>
<div class="t" style="left:586.4px;top:407.6px;font-size:5.4px;color:#6c6c6c">0 px</div>
<div class="t" style="left:619.8px;top:407.6px;font-size:5.4px;color:#e8e8e8;font-weight:bold">H:</div>
<div class="t" style="left:628.8px;top:407.6px;font-size:5.4px;color:#6c6c6c">0 px</div>
<div class="t" style="left:578px;top:423.4px;font-size:5.4px;color:#e8e8e8;font-weight:bold">R:</div>
<div class="t" style="left:586.4px;top:423.4px;font-size:5.4px;color:#6c6c6c">0 °</div>
<div class="t" style="left:619.8px;top:423.4px;font-size:5.4px;color:#e8e8e8;font-weight:bold">S:</div>
<div class="t" style="left:628.8px;top:423.4px;font-size:5.4px;color:#6c6c6c">0 °</div>
<div class="a" style="left:0;top:439px;width:690px;height:11px;overflow:hidden"><div class="t" style="left:9px;top:1.6px;font-size:5.15px;color:#8c8c8c"><b>クリック</b>でオブジェクトを選択します。<b>クリック+⇧</b>で選択に追加します。<b>ドラッグ</b>でノードをマーキー選択します。<b>ドラッグ+⌥</b>でなげなわノード選択を開始します。<b>クリック+⌥</b>でポリゴンノード選択を開始します。<b>ドラッグ+⇧</b>でノードを選択に追加します。<b>ドラッグ+⌃</b>で選択からノードを削除します。</div></div><style>.t b{color:#fff}</style>
<div class="a" style="left:0;top:0;width:4px;height:4px;background:radial-gradient(circle at 100% 100%,transparent 3.4px,#000 4px)"></div><div class="a" style="left:685px;top:0;width:5px;height:5px;background:radial-gradient(circle at 0 100%,transparent 4.4px,#000 5px)"></div><div class="a" style="left:0;top:446px;width:4px;height:4px;background:radial-gradient(circle at 100% 0,transparent 3.4px,#000 4px)"></div><div class="a" style="left:686px;top:446px;width:4px;height:4px;background:radial-gradient(circle at 0 0,transparent 3.4px,#000 4px)"></div>
</body></html>
